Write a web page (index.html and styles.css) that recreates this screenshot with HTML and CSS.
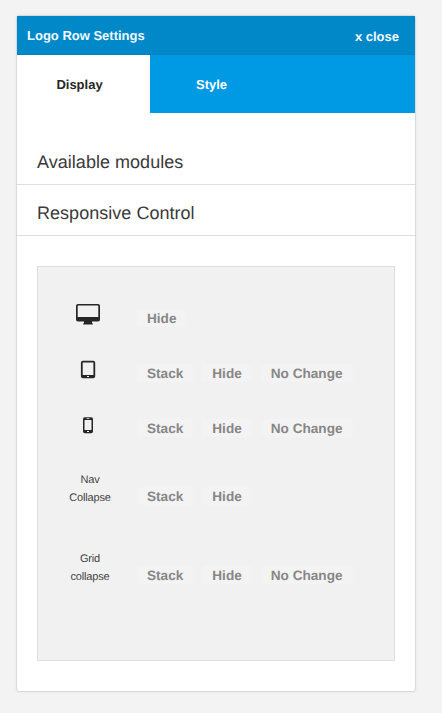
FILE: index.html
```html
<!DOCTYPE html>
<html lang="en">
<head>
<meta charset="utf-8">
<title>Logo Row Settings</title>
<link rel="stylesheet" href="styles.css">
</head>
<body>
<section class="panel">
  <header class="header"><span class="title">Logo Row Settings</span><span class="close">x close</span></header>
  <nav class="tabs"><span class="tab active">Display</span><span class="tab">Style</span></nav>
  <h2 class="section first">Available modules</h2>
  <h2 class="section">Responsive Control</h2>
  <div class="controls">
    <div class="row">
      <div class="device"><svg width="26" height="24" viewBox="0 0 26 24"><path fill="#262626" fill-rule="evenodd" d="M3 1h20a2 2 0 0 1 2 2v13.500a2 2 0 0 1-2 2H17v1.500l.8.5v1H8.200v-1l.8-.5v-1.500H3a2 2 0 0 1-2-2V3a2 2 0 0 1 2-2zM3.300 2.600a.6.6 0 0 0-.6.6V13.900h20.600V3.200a.6.6 0 0 0-.6-.6z"/></svg></div>
      <div class="buttons"><span class="btn">Hide</span></div>
    </div>
    <div class="row">
      <div class="device"><svg width="26" height="24" viewBox="0 0 26 24"><path fill="#262626" fill-rule="evenodd" d="M7.900 2.800h10.300a2 2 0 0 1 2 2v13.400a2 2 0 0 1-2 2H7.900a2 2 0 0 1-2-2V4.800a2 2 0 0 1 2-2zM7.700 4.500v12.600h10.700V4.500zM12 18h2v1h-2z"/></svg></div>
      <div class="buttons"><span class="btn">Stack</span><span class="btn">Hide</span><span class="btn">No Change</span></div>
    </div>
    <div class="row phone">
      <div class="device"><svg width="26" height="24" viewBox="0 0 26 24"><path fill="#262626" fill-rule="evenodd" d="M9.800 4.200h6.400A1.800 1.800 0 0 1 18 6v12.400a1.800 1.800 0 0 1-1.800 1.800H9.800A1.800 1.800 0 0 1 8 18.400V6A1.800 1.800 0 0 1 9.800 4.200zM9.500 7v10h7V7zM11.500 5.300v.6h3v-.6zM12 18v1h2v-1z"/></svg></div>
      <div class="buttons"><span class="btn">Stack</span><span class="btn">Hide</span><span class="btn">No Change</span></div>
    </div>
    <div class="row nav-row">
      <div class="device label">Nav<br>Collapse</div>
      <div class="buttons"><span class="btn">Stack</span><span class="btn">Hide</span></div>
    </div>
    <div class="row grid-row">
      <div class="device label">Grid<br>collapse</div>
      <div class="buttons"><span class="btn">Stack</span><span class="btn">Hide</span><span class="btn">No Change</span></div>
    </div>
  </div>
</section>
</body>
</html>
```
FILE: styles.css
```css
* { box-sizing: border-box; }
body {
  margin: 0;
  padding: 15px 26px 21px 16px;
  height: 713px;
  background: #f3f3f3;
  font-family: "Liberation Sans", Arial, sans-serif;
  text-rendering: geometricPrecision;
}
.panel {
  height: 677px;
  border: 1px solid #dadada;
  border-radius: 3px;
  background: #fff;
  box-shadow: 0 0 3px rgba(0, 0, 0, .06);
}
.header {
  display: flex;
  justify-content: space-between;
  height: 39px;
  padding: 0 16px 0 10px;
  background: #0088c9;
  border-bottom: 1px solid #0081be;
  color: #f2faff;
  font-size: 13px;
  font-weight: bold;
  line-height: 39px;
}
.close { padding-top: 1px; }
.tabs {
  display: flex;
  height: 58px;
  background: #0099e3;
}
.tab {
  width: 133px;
  padding-left: 46px;
  color: #fff;
  font-size: 13px;
  font-weight: bold;
  line-height: 59px;
}
.tab.active {
  padding-left: 39.4px;
  background: #fff;
  color: #262626;
}
.section {
  height: 51px;
  margin: 0;
  padding: 6px 20px 0;
  border-bottom: 1px solid #dedede;
  color: #3a3a3a;
  font-size: 18px;
  font-weight: normal;
  letter-spacing: .03px;
  line-height: 44px;
}
.section.first { height: 72px; padding-top: 27px; }
.controls {
  height: 395px;
  margin: 30px 20px 0;
  padding-top: 34px;
  border: 1px solid #dedede;
  background: #f1f1f1;
}
.row { display: flex; height: 55px; }
.device {
  flex: none;
  width: 99px;
  padding-left: 37px;
}
.device svg { display: block; margin-top: 2px; }
.buttons {
  display: flex;
  align-items: flex-start;
  gap: 9px;
  padding-top: 8px;
}
.btn {
  height: 18px;
  padding: 0 10px;
  border-radius: 3px;
  background: #f3f3f3;
  color: #878787;
  font-size: 13.6px;
  font-weight: bold;
  line-height: 19px;
}
.row.phone { height: 57px; }
.device.label {
  padding: 3px 0 0 5px;
  color: #444;
  font-size: 11px;
  letter-spacing: -.15px;
  line-height: 18px;
  text-align: center;
}
.nav-row { height: 79px; }
.nav-row .buttons,
.grid-row .buttons { padding-top: 19px; }
```
